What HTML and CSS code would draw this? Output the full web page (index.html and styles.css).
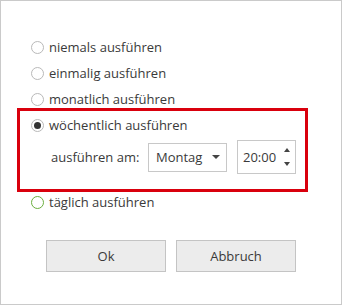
FILE: index.html
```html
<!DOCTYPE html>
<html lang="de">
<head>
<meta charset="utf-8">
<link rel="stylesheet" href="styles.css">
</head>
<body>
<div class="dialog">
  <div class="options">
    <label class="row"><span class="radio"></span><span>niemals ausführen</span></label>
    <label class="row"><span class="radio"></span><span>einmalig ausführen</span></label>
    <label class="row"><span class="radio"></span><span>monatlich ausführen</span></label>
    <div class="group">
      <label class="row"><span class="radio checked"></span><span>wöchentlich ausführen</span></label>
      <div class="controls">
        <span class="lbl">ausführen am:</span>
        <div class="select"><span>Montag</span><span class="caret"></span></div>
        <div class="spinner"><span>20:00</span><span class="arrows"><span class="up"></span><span class="down"></span></span></div>
      </div>
    </div>
    <label class="row daily"><span class="radio green"></span><span>täglich ausführen</span></label>
  </div>
  <div class="buttons">
    <button class="btn">Ok</button>
    <button class="btn">Abbruch</button>
  </div>
</div>
</body>
</html>
```
FILE: styles.css
```css
html, body { margin: 0; padding: 0; background: #fff; }
.dialog {
  box-sizing: border-box;
  width: 342px;
  height: 305px;
  border: 1px solid #cacaca;
  font-family: "Open Sans", "Noto Sans", sans-serif;
  font-size: 13px;
  color: #3a3a3a;
  padding-top: 33px;
}
.row {
  display: flex;
  align-items: center;
  height: 26px;
  padding-left: 30px;
}
.radio {
  box-sizing: border-box;
  width: 13px;
  height: 13px;
  border: 1px solid #b9b9b9;
  border-radius: 50%;
  margin-right: 5px;
  display: flex;
  align-items: center;
  justify-content: center;
  flex: none;
}
.radio.checked::after {
  content: "";
  width: 7px;
  height: 7px;
  border-radius: 50%;
  background: #333;
}
.radio.green { border: 1.5px solid #6aae3e; }
.group { position: relative; }
.group::before {
  content: "";
  position: absolute;
  left: 16px;
  right: 33px;
  top: -4px;
  bottom: -18px;
  border: 3px solid #d9000d;
  pointer-events: none;
}
.controls {
  display: flex;
  align-items: center;
  margin-top: 2px;
  height: 34px;
  padding-left: 50px;
}
.lbl { width: 97px; }
.select {
  box-sizing: border-box;
  width: 79px;
  height: 29px;
  border: 1px solid #c8c8c8;
  display: flex;
  align-items: center;
  justify-content: space-between;
  padding: 0 6px 0 7px;
}
.caret {
  width: 0; height: 0;
  border-left: 4px solid transparent;
  border-right: 4px solid transparent;
  border-top: 4px solid #444;
}
.spinner {
  box-sizing: border-box;
  margin-left: 10px;
  width: 59px;
  height: 34px;
  border: 1px solid #c8c8c8;
  display: flex;
  align-items: center;
  justify-content: space-between;
  padding: 0 5px 0 5px;
}
.arrows {
  display: flex;
  flex-direction: column;
  gap: 10px;
}
.up, .down {
  width: 0; height: 0;
  border-left: 3.5px solid transparent;
  border-right: 3.5px solid transparent;
}
.up { border-bottom: 4px solid #444; }
.down { border-top: 4px solid #444; }
.daily { margin-top: 15px; }
.buttons {
  display: flex;
  justify-content: center;
  gap: 10px;
  margin-top: 25px;
  padding-left: 0;
}
.btn {
  box-sizing: border-box;
  width: 120px;
  height: 32px;
  background: #ececec;
  border: 1px solid #c4c4c4;
  font-family: inherit;
  font-size: 13px;
  color: #3a3a3a;
  padding: 0;
}
```
